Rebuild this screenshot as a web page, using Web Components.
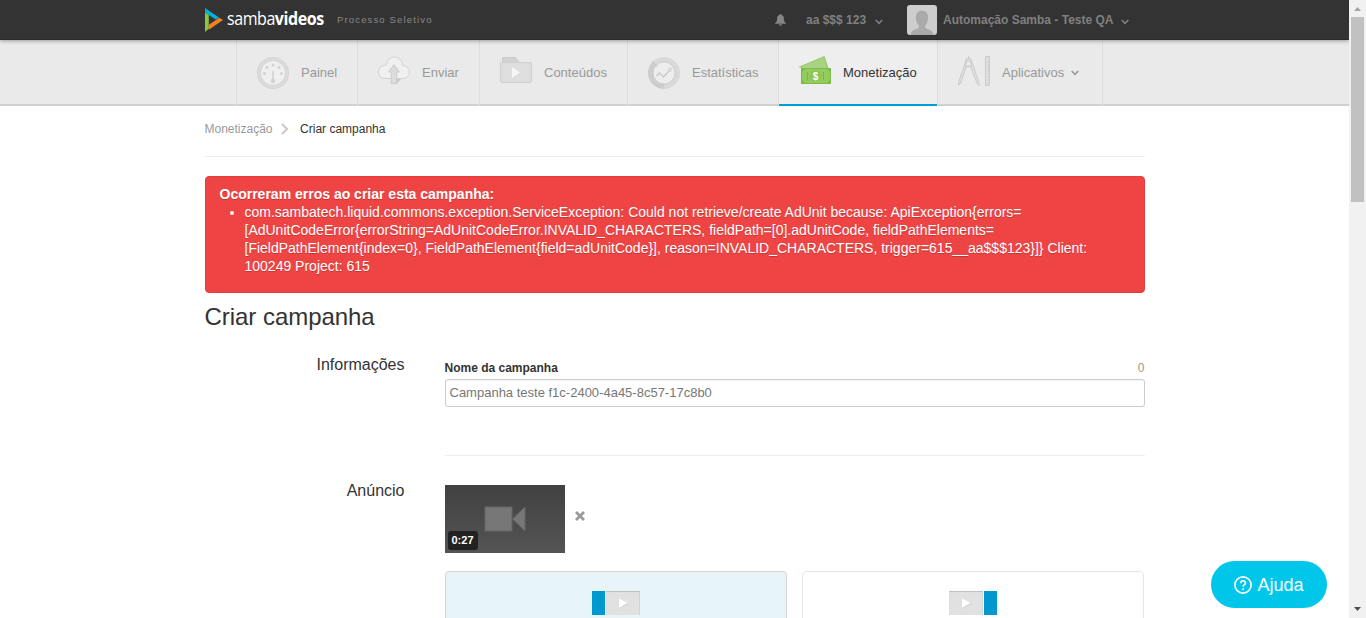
<!DOCTYPE html>
<html lang="pt-BR">
<head>
<meta charset="utf-8">
<title>Criar campanha</title>
<style>
html,body{margin:0;height:100%;overflow:hidden;background:#fff}
body{font:13px "Liberation Sans",Arial,sans-serif;color:#333}
</style>
</head>
<body>
<samba-app></samba-app>
<script>
const define = (name, html) => {
  const t = document.createElement('template');
  t.innerHTML = html;
  customElements.define(name, class extends HTMLElement {
    constructor(){
      super();
      this.attachShadow({mode:'open'}).appendChild(t.content.cloneNode(true));
    }
  });
};

define('down-caret', `<style>:host{display:block;width:8px;height:6px}svg{display:block}</style>
<svg width="8" height="6" viewBox="0 0 8 6" fill="none" stroke="currentColor" stroke-width="1.6"><path d="M.7 1 4 4.300 7.300 1"/></svg>`);

define('samba-logo', `<style>
:host{display:flex;align-items:center;color:#fff;width:120px;height:24px}
svg{display:block;flex:none;margin-right:4px}
span{display:block;flex:none;font:18px/22px "Open Sans",sans-serif;letter-spacing:-.5px;white-space:nowrap;transform:scaleX(.89);transform-origin:0 50%;position:relative;top:-2px}
b{font-weight:700}
</style>
<svg width="18" height="24" viewBox="0 0 18 24"><path fill="#00b3dc" d="M0 0 14 9.600 10.800 11.600 0 4.500z"/><path fill="#8cc63f" d="M0 4.500 3.800 7V20.700L0 24z"/><path fill="#f58220" d="M14.300 9.800 18 12 3.800 21.800V16.700z"/></svg>
<span>samba<b>videos</b></span>`);

define('top-bar', `<style>
:host{display:block;height:39px;background:#333;border-bottom:1px solid #2a2a2a;box-shadow:0 1px 4px rgba(0,0,0,.35);position:relative;z-index:2;color:#808080}
.in{width:940px;height:39px;margin-left:205px;display:flex;align-items:center;font:bold 12px/16px "Liberation Sans",Arial,sans-serif}
.proj{font-weight:400;font-size:9.5px;letter-spacing:1.15px;margin-left:12px;width:110px;white-space:nowrap;color:#8a8a8a}
.bell{margin-left:328px;width:11px;height:12px}
.acct{margin-left:20px;width:61px;white-space:nowrap}
down-caret{margin:4px 0 0 8px}
.av{margin-left:24px;width:30px;height:30px;border-radius:3px;overflow:hidden;flex:none}
.user{margin-left:6px;width:170px;white-space:nowrap}
svg{display:block}
</style>
<div class="in"><samba-logo></samba-logo><span class="proj">Processo Seletivo</span>
<svg class="bell" viewBox="0 0 11 12" fill="#858585"><path d="M5.500 0c.7 0 1 .4 1 .9 1.700.5 2.400 1.800 2.400 3.600 0 2.600.5 3.500 2.100 4.800v.5H0v-.5C1.600 8 2.100 7.100 2.100 4.500 2.100 2.700 2.800 1.400 4.500.900c0-.5.300-.9 1-.9zM4 10.300h3c-.2 1-.7 1.500-1.500 1.500S4.200 11.300 4 10.300z"/></svg>
<span class="acct">aa $$$ 123</span><down-caret></down-caret>
<svg class="av" viewBox="0 0 30 30"><path fill="#cdcdcd" d="M0 0h30v30H0z"/><path fill="#aaa" stroke="#999" stroke-width=".5" d="M15 6c4 0 5.800 3 5.600 7-.2 4-1.600 6-2.900 7.700-.4 2.700 1.100 3.400 3.500 4 3 .7 4.400 2.200 4.800 5.300H4c.4-3.100 1.800-4.600 4.800-5.300 2.400-.6 3.900-1.300 3.500-4C11 19 9.600 17 9.400 13 9.200 9 11 6 15 6z"/></svg>
<span class="user">Automação Samba - Teste QA</span><down-caret></down-caret></div>`);

define('nav-item', `<style>
:host{display:flex;box-sizing:border-box;height:66px;border-left:1px solid #ddd;color:#999;white-space:nowrap}
:host([active]){background:#eee;color:#333}
:host([active]) .in{border-bottom:2px solid #009ed6}
.in{display:flex;flex:1;height:64px;padding-left:20px}
.ic{width:32px;margin-top:16px;margin-right:12px;flex:none}
.t{line-height:16px;margin-top:25px;display:flex}
</style>
<div class="in"><div class="ic"><slot name="icon"></slot></div><div class="t"><slot></slot></div></div>`);

define('main-nav', `<style>
:host{display:block;height:66px;background:#eaeaea;box-shadow:inset 0 -2px #d0d0d0}
nav{display:flex;margin-left:236px;width:867px;box-sizing:border-box;border-right:1px solid #ddd}
svg{display:block;overflow:visible}
.p{width:121px}.e{width:122px}.c{width:148px}.s{width:151px}.m{width:159px}.a{width:165px}
down-caret{margin:5px 0 0 7px}
</style>
<nav>
<nav-item class="p"><svg slot="icon" width="32" height="34"><circle cx="16" cy="17" r="14" fill="#efefef" stroke="#d0d0d0" stroke-width="4"/><circle cx="16" cy="17" r="14" fill="none" stroke="#dcdcdc" stroke-width="2.400"/><g fill="#d2d2d2"><circle cx="7.500" cy="17.500" r="1.500"/><circle cx="10" cy="11.500" r="1.500"/><circle cx="16" cy="9" r="1.500"/><circle cx="22" cy="11.500" r="1.500"/><circle cx="24.500" cy="17.500" r="1.500"/><circle cx="16" cy="25" r="2.200"/><path d="M15.200 15h1.600v10h-1.600z"/></g></svg>Painel</nav-item>
<nav-item class="e"><svg slot="icon" width="32" height="32"><path d="M7 22.500a6.500 6.500 0 0 1-.5-13l2-.5a8 8 0 0 1 16 0l.5.500a6.500 6.500 0 0 1 0 13z" fill="#f0f0f0" stroke="#d2d2d2"/><path d="M19 27.500v-5h4.500z" fill="#ccc"/><path d="m16 8.500 5.300 7.500h-2.600v11.500h-5.400V16h-2.600z" fill="#dcdcdc" stroke="#ccc"/></svg>Enviar</nav-item>
<nav-item class="c"><svg slot="icon" width="32" height="32"><path d="M2.500 6.500v-5h13l4 5" fill="#d2d2d2" stroke="#ccc"/><rect x=".5" y="6.500" width="31" height="20" rx="1.500" fill="#dedede" stroke="#d0d0d0"/><path d="M12 11v11l8-5.500z" fill="#f6f6f6"/></svg>Conteúdos</nav-item>
<nav-item class="s"><svg slot="icon" width="32" height="34"><circle cx="16" cy="17" r="13.500" fill="#ededed" stroke="#d9d9d9" stroke-width="5"/><path d="M16 30.500A13.500 13.500 0 0 1 6.500 7.500" fill="none" stroke="#cdcdcd" stroke-width="5"/><circle cx="16" cy="17" r="11" fill="none" stroke="#cfcfcf"/><path d="m4 5 6 6" stroke="#c4c4c4"/><path d="m8.500 20 3-3 4 4 5.500-6" fill="none" stroke="#c8c8c8" stroke-width="1.300"/><circle cx="22" cy="13.500" r="1.500" fill="none" stroke="#c8c8c8"/></svg>Estatísticas</nav-item>
<nav-item class="m" active><svg slot="icon" width="32" height="32"><path d="M0 11 25.500 0l4 12H2z" fill="#a9d284"/><path d="M.5 11 25 .8l3.600 11" fill="none" stroke="#98c970"/><path d="M2 12h30v16H2z" fill="#7cbb47"/><path d="M6 13h22l3 3v8l-3 3H6l-3-3v-8z" fill="#93cb5e"/><path d="M8.500 16v8M24.500 16v8" stroke="#79b844"/><circle cx="16.500" cy="20" r="5.500" fill="#88c552"/><text x="16.500" y="23.700" text-anchor="middle" font-size="10" font-weight="700" font-family="Liberation Sans" fill="#fff">$</text></svg>Monetização</nav-item>
<nav-item class="a"><svg slot="icon" width="34" height="32"><g fill="none" stroke="#cacaca"><path d="M8.500 2.500h4l2.500 6.500 6 17.500v3l-2-2.500-6.500-16.500h-4L2.500 27l-2 2.500v-3L6.500 9z" fill="#e0e0e0"/><path d="M8.500 5h4l1 5h-6z" fill="#eaeaea"/><path d="M10.500 0v3"/><path d="M27.500.5h4v29h-4z" fill="#e0e0e0"/><path d="M29.500 3h2m-2 3h2m-2 3h2m-2 3h2m-2 3h2m-2 3h2m-2 3h2m-2 3h2m-2 3h2"/></g></svg>Aplicativos<down-caret></down-caret></nav-item>
</nav>`);

define('page-crumbs', `<style>
:host{display:flex;height:51px;border-bottom:1px solid #eee;font-size:12px;line-height:16px;color:#999;box-sizing:border-box}
div{margin-top:15px;white-space:nowrap}
svg{display:block;margin:17px 11px 0 8.5px}
.n{color:#333}
</style><div><slot name="parent"></slot></div><svg width="8" height="12" fill="none" stroke="#ccc" stroke-width="2.200"><path d="m1 1 5 5-5 5"/></svg><div class="n"><slot></slot></div>`);

define('error-alert', `<style>
:host{display:block;box-sizing:border-box;height:117px;margin-top:19px;background:#ee4444;border:1px solid #e63c40;border-radius:4px;color:#fff;padding:8px 34px 0 14px;font-size:14px;line-height:18px;text-shadow:0 1px 0 rgba(0,0,0,.2)}
ul{margin:0;padding-left:25px}
li{white-space:nowrap}
</style><b><slot name="title"></slot></b><ul><li><slot></slot></li></ul>`);

define('form-section', `<style>
:host{display:grid;grid-template-columns:200px 700px;column-gap:40px}
h2{margin:0;text-align:right;font-weight:400;font-size:16px;line-height:20px}
</style><h2><slot name="label"></slot></h2><div><slot></slot></div>`);

define('text-field', `<style>
:host{display:block}
.l{display:flex;justify-content:space-between;font-size:12px;line-height:16px}
.l span{color:#998}
.b{box-sizing:border-box;height:28px;margin-top:3px;border:1px solid #ccc;border-radius:3px;padding:5px 4px;font-size:13px;line-height:16px;color:#777;white-space:nowrap;box-shadow:inset 0 1px 1px rgba(0,0,0,.05)}
</style><div class="l"><b><slot name="label"></slot></b><span>0</span></div><div class="b"><slot></slot></div>`);

define('ad-thumb', `<style>
:host{display:flex;align-items:center}
.v{width:120px;height:68px;background:linear-gradient(#414141,#545454);display:grid}
.v>*{grid-area:1/1}
.d{align-self:end;margin:0 0 3px 3px;width:30px;height:19px;border-radius:3px;background:#222;color:#fff;font:bold 11px/19px "Liberation Sans",Arial,sans-serif;text-align:center}
.x{margin:-6px 0 0 10.5px}
svg{display:block}
</style><div class="v"><svg width="120" height="68"><path d="M40 22h27v24H40zM67.500 34 80 22v24z" fill="#777" stroke="#666"/></svg><span class="d"><slot></slot></span></div>
<svg class="x" width="10" height="10" fill="none" stroke="#999" stroke-width="2.800"><path d="m1 1 8 8M9 1 1 9"/></svg>`);

define('ad-position', `<style>
:host{display:flex;justify-content:center;box-sizing:border-box;width:342px;height:90px;border:1px solid #e6e6e6;border-radius:4px;padding-top:19px;gap:1px}
:host([selected]){background:#e7f4f8;border-color:#d2d6d7}
:host([end]){flex-direction:row-reverse}
i{display:block;width:13px;height:24px;background:#0099cf}
p{margin:0;width:34px;height:24px;background:#e1e1e1;box-shadow:inset 0 1px 1px #bcbcbc,inset -1px 0 #d5d5d5}
svg{display:block}
</style><i></i><p><svg width="34" height="24"><path d="m13 8 9 5-9 4.500z" fill="#ccc"/><path d="m13 7.500 8.500 4.500-8.500 5z" fill="#fff"/></svg></p>`);

define('help-button', `<style>
:host{position:absolute;left:1211px;top:561px;width:116px;height:47px;border-radius:24px;background:#00c7ea;color:#fff;display:flex;align-items:center;box-sizing:border-box;padding-left:23px;font:18px/24px "Liberation Sans",Arial,sans-serif;gap:5.5px}
svg{display:block}
</style><svg width="18" height="18" fill="none" stroke="#fff" stroke-width="1.700"><circle cx="9" cy="9" r="8.100"/><path d="M6.700 7.200C6.700 3.900 11.500 4 11.500 7c0 1.700-2.400 1.700-2.400 3.800M9.100 12.200v1.800"/></svg><slot></slot>`);

define('scroll-rail', `<style>
:host{display:flex;flex-direction:column;align-items:center;width:17px;height:618px;background:#f1f1f1}
i{display:block;width:13px;height:185px;background:#c1c1c1;margin-bottom:auto}
svg{display:block}
</style><svg width="17" height="17"><path d="M5 11h7L8.500 7z" fill="#a3a3a3"/></svg><i></i><svg width="17" height="17"><path d="M5 6h7l-3.500 4z" fill="#505050"/></svg>`);

define('samba-app', `<style>
:host{display:grid;grid-template-columns:1349px 17px;height:618px;overflow:hidden}
.page{height:618px;overflow:hidden}
main{width:940px;margin-left:204.5px}
h1{font-size:24px;line-height:30px;font-weight:400;margin:9px 0 0;letter-spacing:-.04px}
.info{margin-top:23px}
.info text-field{margin-top:5px;padding-bottom:48px;border-bottom:1px solid #eee}
.ad{margin-top:25px}
ad-thumb{margin-top:4px}
.opts{display:flex;gap:15px;margin-top:18px}
</style>
<div class="page">
<top-bar></top-bar><main-nav></main-nav>
<main>
<page-crumbs><span slot="parent">Monetização</span>Criar campanha</page-crumbs>
<error-alert><span slot="title">Ocorreram erros ao criar esta campanha:</span>com.sambatech.liquid.commons.exception.ServiceException: Could not retrieve/create AdUnit because: ApiException{errors=<br>[AdUnitCodeError{errorString=AdUnitCodeError.INVALID_CHARACTERS, fieldPath=[0].adUnitCode, fieldPathElements=<br>[FieldPathElement{index=0}, FieldPathElement{field=adUnitCode}], reason=INVALID_CHARACTERS, trigger=615__aa$$$123}]} Client:<br>100249 Project: 615</error-alert>
<h1>Criar campanha</h1>
<form-section class="info"><span slot="label">Informações</span><text-field><span slot="label">Nome da campanha</span>Campanha teste f1c-2400-4a45-8c57-17c8b0</text-field></form-section>
<form-section class="ad"><span slot="label">Anúncio</span><ad-thumb>0:27</ad-thumb><div class="opts"><ad-position selected></ad-position><ad-position end></ad-position></div></form-section>
</main></div>
<scroll-rail></scroll-rail>
<help-button>Ajuda</help-button>`);
</script>
</body>
</html>
